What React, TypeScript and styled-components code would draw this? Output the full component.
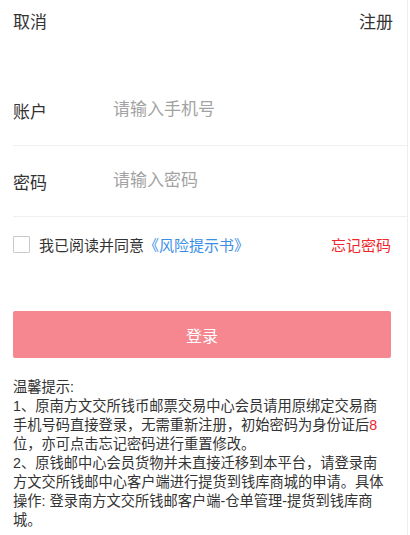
import React, { useState } from "react";
import styled, { createGlobalStyle } from "styled-components";

const GlobalStyle = createGlobalStyle`
  body {
    margin: 0;
    background: #fff;
    font-family: "Liberation Sans", "Noto Sans CJK SC", sans-serif;
    color: #333;
  }
`;

const Page = styled.div`
  width: 408px;
  min-height: 100vh;
  border-right: 1px solid #eeeeee;
  box-sizing: border-box;
`;

const Header = styled.div`
  height: 40px;
  display: flex;
  align-items: center;
  justify-content: space-between;
  padding: 0 14px 0 13px;
  font-size: 17px;
  color: #333;
`;

const HeaderLink = styled.span`
  cursor: pointer;
`;

const Form = styled.div`
  margin-top: 35px;
  margin-left: 13px;
`;

const Row = styled.div`
  height: 70px;
  display: flex;
  align-items: center;
  border-bottom: 1px solid #f0f0f0;
`;

const Label = styled.span`
  width: 100px;
  font-size: 17px;
  color: #333;
`;

const Input = styled.input`
  flex: 1;
  border: none;
  outline: none;
  padding: 0;
  font-size: 17px;
  font-family: "Liberation Sans", "Noto Sans CJK SC", sans-serif;
  color: #333;
  background: transparent;

  &::placeholder {
    color: #a3a3a3;
  }
`;

const AgreeRow = styled.div`
  margin: 19px 16px 0 13px;
  height: 17px;
  display: flex;
  align-items: center;
  font-size: 15px;
`;

const Check = styled.span<{ $checked: boolean }>`
  width: 15px;
  height: 15px;
  border: 1px solid #c9c9c9;
  border-radius: 1px;
  margin-right: 9px;
  background: ${(p) => (p.$checked ? "#f6868f" : "#fff")};
  cursor: pointer;
`;

const AgreeText = styled.span`
  flex: 1;
  color: #333;
`;

const Link = styled.span`
  color: #3a8ee6;
`;

const Forgot = styled.span`
  color: #f0262d;
`;

const LoginButton = styled.button`
  display: block;
  margin: 58px 17px 0 13px;
  width: 378px;
  height: 47px;
  border: none;
  border-radius: 2px;
  background: #f6868f;
  color: #fff;
  font-size: 16px;
  font-family: "Liberation Sans", "Noto Sans CJK SC", sans-serif;
`;

const Tips = styled.div`
  margin: 20px 17px 0 13px;
  font-size: 14.25px;
  line-height: 19px;
  color: #333;
`;

const Red = styled.span`
  color: #f0262d;
`;

export default function App() {
  const [agreed, setAgreed] = useState(false);
  const [phone, setPhone] = useState("");
  const [password, setPassword] = useState("");

  return (
    <Page>
      <GlobalStyle />
      <Header>
        <HeaderLink>取消</HeaderLink>
        <HeaderLink>注册</HeaderLink>
      </Header>
      <Form>
        <Row>
          <Label>账户</Label>
          <Input value={phone} onChange={(e) => setPhone(e.target.value)} placeholder="请输入手机号" />
        </Row>
        <Row>
          <Label>密码</Label>
          <Input type="password" value={password} onChange={(e) => setPassword(e.target.value)} placeholder="请输入密码" />
        </Row>
      </Form>
      <AgreeRow>
        <Check $checked={agreed} onClick={() => setAgreed(!agreed)} />
        <AgreeText>
          我已阅读并同意<Link>《风险提示书》</Link>
        </AgreeText>
        <Forgot>忘记密码</Forgot>
      </AgreeRow>
      <LoginButton>登录</LoginButton>
      <Tips>
        温馨提示:
        <br />
        1、原南方文交所钱币邮票交易中心会员请用原绑定交易商
        <br />
        手机号码直接登录，无需重新注册，初始密码为身份证后<Red>8</Red>
        <br />
        位，亦可点击忘记密码进行重置修改。
        <br />
        2、原钱邮中心会员货物并未直接迁移到本平台，请登录南
        <br />
        方文交所钱邮中心客户端进行提货到钱库商城的申请。具体
        <br />
        操作: 登录南方文交所钱邮客户端-仓单管理-提货到钱库商
        <br />
        城。
      </Tips>
    </Page>
  );
}
